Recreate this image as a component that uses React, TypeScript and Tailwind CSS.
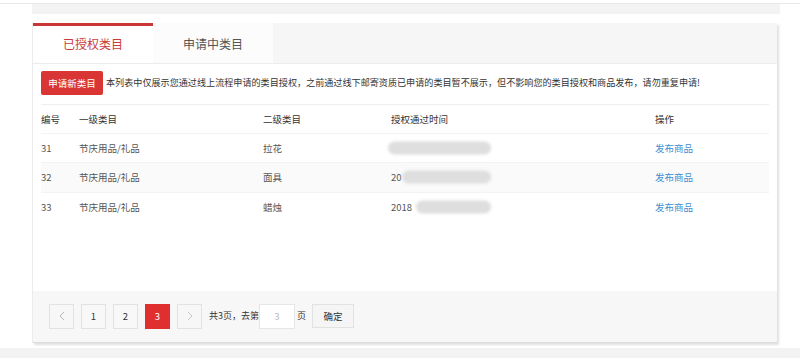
import React from 'react';

const rows = [
  { id: 31, first: '节庆用品/礼品', second: '拉花', prefix: '', blurFrom: 0 },
  { id: 32, first: '节庆用品/礼品', second: '面具', prefix: '20', blurFrom: 14 },
  { id: 33, first: '节庆用品/礼品', second: '蜡烛', prefix: '2018', blurFrom: 28 },
];

function BlurredDate({ prefix, offset }: { prefix: string; offset: number }) {
  return (
    <div className="relative flex h-full items-center">
      <span>{prefix}</span>
      <div
        className="absolute top-1/2 h-[13px] -translate-y-1/2 rounded-full bg-[#dedede] blur-[1.5px]"
        style={{ left: offset - 3, width: 103 - offset }}
      />
    </div>
  );
}

export default function App() {
  return (
    <div
      className="relative h-[358px] w-[800px] overflow-hidden bg-white text-[#333]"
      style={{ fontFamily: '"Noto Sans CJK SC", "Noto Sans", sans-serif' }}
    >
      <div className="h-[4px] border-b border-[#e8e8e8] bg-white" />
      <div className="ml-[32px] mr-[20px] h-[10px] bg-[#f3f3f3]" />

      <div className="ml-[32px] mt-[9px] w-[745px] border-l border-[#ececec] bg-white shadow-[2px_2px_2px_rgba(0,0,0,0.12)]">
        {/* tabs */}
        <div className="flex h-[41px] border-b border-[#ececec] bg-[#f6f6f6]">
          <div className="flex w-[120px] items-center justify-center border-t-[3px] border-[#c93636] bg-white pb-[1px] text-[12px] text-[#c93c3c]">
            已授权类目
          </div>
          <div className="flex w-[120px] items-center justify-center bg-[#fcfcfc] pt-[2px] text-[12px] text-[#555]">
            申请中类目
          </div>
        </div>

        <div className="px-[8px]">
          <div className="flex h-[41px] items-center border-b border-[#eeeeee] pb-[2px]">
            <button className="h-[24px] w-[62px] rounded-[2px] bg-[#d93535] text-[9.5px] text-white">
              申请新类目
            </button>
            <span className="ml-[3px] whitespace-nowrap text-[9.1px] text-[#333]">
              本列表中仅展示您通过线上流程申请的类目授权，之前通过线下邮寄资质已申请的类目暂不展示，但不影响您的类目授权和商品发布，请勿重复申请!
            </span>
          </div>

          <table className="w-full border-collapse text-left text-[9.5px]">
            <thead>
              <tr className="h-[28px] text-[#333]">
                <th className="w-[38px] font-normal">编号</th>
                <th className="w-[184px] font-normal">一级类目</th>
                <th className="w-[128px] font-normal">二级类目</th>
                <th className="w-[264px] font-normal">授权通过时间</th>
                <th className="font-normal">操作</th>
              </tr>
            </thead>
            <tbody className="text-[#555]">
              {rows.map((r, i) => (
                <tr
                  key={r.id}
                  className={`h-[29.5px] border-t border-[#f3f3f3] ${i === 1 ? 'bg-[#fafafa]' : ''}`}
                >
                  <td>{r.id}</td>
                  <td>{r.first}</td>
                  <td>{r.second}</td>
                  <td className="h-[29px]">
                    <BlurredDate prefix={r.prefix} offset={r.blurFrom} />
                  </td>
                  <td className="text-[#3d8fd1]">发布商品</td>
                </tr>
              ))}
            </tbody>
          </table>
        </div>

        <div className="h-[69px]" />

        {/* pagination */}
        <div className="flex h-[52px] items-center border-b border-[#dcdcdc] bg-[#f7f7f7] pl-[16px] text-[9.5px]">
          <div className="flex items-center gap-[7px]">
            <button className="flex h-[25px] w-[25px] items-center justify-center border border-[#e2e2e2] bg-[#f7f7f7]">
              <svg width="6" height="10" viewBox="0 0 6 10" fill="none" stroke="#b5b5b5" strokeWidth="1">
                <path d="M5 1 1 5l4 4" />
              </svg>
            </button>
            <button className="h-[25px] w-[25px] border border-[#e2e2e2] bg-[#f8f8f8] text-[#333]">1</button>
            <button className="h-[25px] w-[25px] border border-[#e2e2e2] bg-[#f8f8f8] text-[#333]">2</button>
            <button className="h-[25px] w-[25px] bg-[#df2f2f] text-white">3</button>
            <button className="flex h-[25px] w-[25px] items-center justify-center border border-[#e2e2e2] bg-[#f7f7f7]">
              <svg width="6" height="10" viewBox="0 0 6 10" fill="none" stroke="#c8c8c8" strokeWidth="1">
                <path d="M1 1l4 4-4 4" />
              </svg>
            </button>
          </div>
          <span className="ml-[7px] whitespace-nowrap text-[9px] text-[#333]">共3页，去第</span>
          <div className="ml-[0px] flex h-[25px] w-[36px] items-center justify-center border border-[#e6e6e6] bg-white text-[#bbb]">
            3
          </div>
          <span className="ml-[2px] text-[9px] text-[#333]">页</span>
          <button className="ml-[6px] h-[24px] w-[42px] border border-[#e2e2e2] bg-[#f5f5f5] text-[#333]">确定</button>
        </div>
      </div>

      <div className="absolute bottom-0 left-0 h-[10px] w-full bg-[#f3f3f3]" />
    </div>
  );
}
